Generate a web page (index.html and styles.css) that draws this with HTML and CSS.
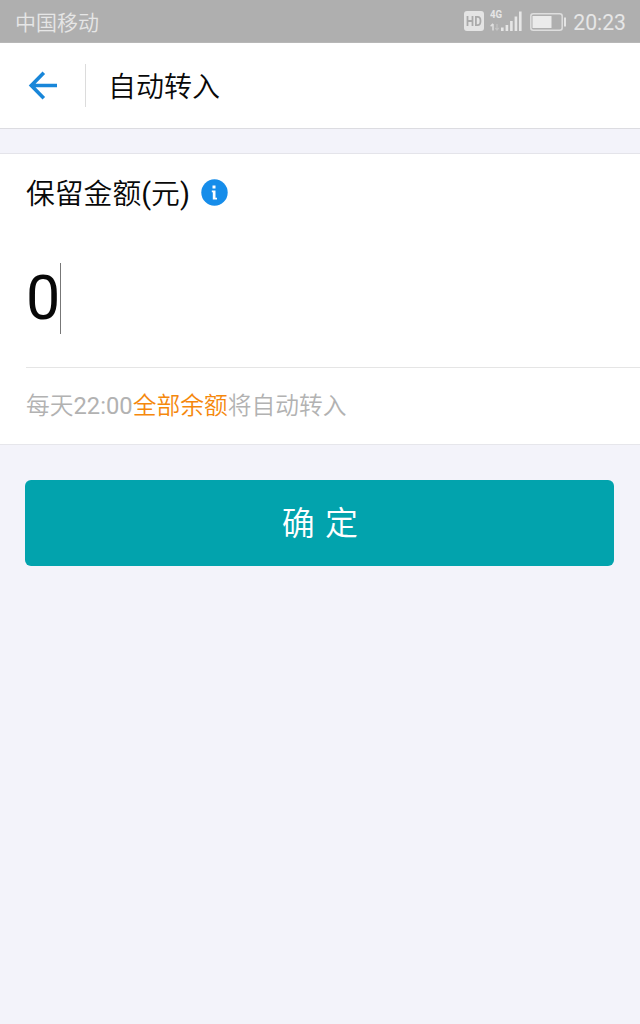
FILE: index.html
```
<!DOCTYPE html>
<html lang="zh-CN">
<head>
<meta charset="utf-8">
<title>自动转入</title>
<link rel="stylesheet" href="styles.css">
</head>
<body>
<div class="status">
  <span class="carrier">中国移动</span>
  <div class="indicators">
    <svg class="hd" width="20" height="20" viewBox="0 0 20 20"><rect width="20" height="20" rx="3" fill="#e4e4e4"/><path d="M3.500 5v10M8.500 5v10M3.500 10h5M11.900 5.900v8.200h1.700c2 0 2.900-1.300 2.900-4.100s-.9-4.100-2.900-4.100z" fill="none" stroke="#aaa" stroke-width="1.800"/></svg>
    <div class="signal">
      <span class="net">4G</span>
      <svg width="32" height="22" viewBox="0 0 32 22"><path d="M12.300 17.500V21M16.900 15v6M21.400 11v10M25.900 6.500v14.500M30.300 1.500V21" stroke="#e6e6e6" stroke-width="2.600"/><path d="M3 20.500V14M.7 16.200L3 13.800" stroke="#e0e0e0" stroke-width="1.500" fill="none"/><path d="M7 14v6M5.300 18L7 20l1.700-2" stroke="#c3c3c3" stroke-width="1.200" fill="none"/></svg>
    </div>
    <svg class="battery" width="37" height="18" viewBox="0 0 37 18"><rect x=".8" y=".8" width="31.400" height="16.400" rx="2.500" fill="none" stroke="#dedede" stroke-width="1.500"/><rect x="2.500" y="3" width="19" height="12" fill="#ebebeb"/><path d="M35 4.500v9" stroke="#e4e4e4" stroke-width="2"/></svg>
    <span class="time">20:23</span>
  </div>
</div>
<header class="header">
  <svg class="back" width="30" height="30" viewBox="0 0 30 30"><path d="M15.800 1.800L3.300 14.500l12.500 12.700M3.500 14.500H29" fill="none" stroke="#1886d9" stroke-width="3.600"/></svg>
  <span class="divider"></span>
  <h1 class="title">自动转入</h1>
</header>
<main>
  <section class="card">
    <div class="label"><span class="label-text">保留金额<span class="paren">(</span>元<span class="paren">)</span></span>
      <svg class="info" width="27" height="27" viewBox="0 0 27 27"><circle cx="13.500" cy="13.500" r="13.200" fill="#168dea"/><path d="M11.500 6.500h3v3h-3zM10.800 11.500h3.700v7.200h1.500v1.800h-4.200v-7.200h-1z" fill="#fff"/></svg>
    </div>
    <div class="amount"><span class="value">0</span><span class="caret"></span></div>
    <p class="hint">每天<span class="clock">22:00</span><span class="accent">全部余额</span>将自动转入</p>
  </section>
  <button class="confirm">确 定</button>
</main>
</body>
</html>
```
FILE: styles.css
```
* { box-sizing: border-box; }
body {
  margin: 0;
  min-height: 1024px;
  background: #f3f3fa;
  font-family: Roboto, "Noto Sans CJK SC DemiLight", "Noto Sans CJK SC", sans-serif;
  color: #080808;
}
.status {
  height: 43px;
  padding: 0 14px 0 15px;
  background: #afafaf;
  border-bottom: 1px solid #b7b7b7;
  display: flex;
  justify-content: space-between;
  align-items: center;
  color: #e6e6e6;
}
.carrier { font-size: 21px; font-weight: 350; line-height: 42px; padding-top: 3px; }
.indicators { display: flex; align-items: center; height: 43px; }
.hd { margin-right: 6px; }
.signal { position: relative; width: 32px; height: 22px; margin-right: 8px; }
.signal svg { display: block; }
.net { position: absolute; left: 0; top: -1px; font-size: 11.5px; line-height: 11px; font-weight: 700; transform: scaleX(.84); transform-origin: left; }
.battery { margin-right: 6px; margin-top: 1px; }
.time { font-size: 21.2px; line-height: 42px; padding-top: 3px; }
.header {
  height: 86px;
  padding-left: 28px;
  background: #fff;
  border-bottom: 1px solid #dcdce1;
  display: flex;
  align-items: center;
}
.divider { width: 1px; height: 43px; background: #dcdcdc; margin: 0 22px 0 27px; }
.title { margin: 0; font-size: 28px; font-weight: 350; line-height: 40px; padding-top: 5px; }
.card {
  margin-top: 24px;
  height: 292px;
  background: #fff;
  border-top: 1px solid #e4e4ea;
  border-bottom: 1px solid #e6e6eb;
  padding-left: 26px;
}
.label { display: flex; align-items: center; height: 77px; font-size: 28.8px; font-weight: 350; gap: 11px; }
.label-text { margin-top: -3px; }
.paren { font-weight: 400; }
.amount { height: 137px; padding-top: 32px; display: flex; border-bottom: 1px solid #e5e5e5; }
.value { font-size: 61px; line-height: 71px; width: 34px; }
.caret { width: 1px; height: 71px; background: #777; }
.hint { margin: 0; font-size: 23.75px; font-weight: 350; line-height: 77px; color: #b2b2b2; }
.clock { font-weight: 400; }
.accent { color: #f5880c; }
.confirm {
  display: block;
  width: 589px;
  height: 86px;
  margin: 35px 0 0 25.4px;
  padding: 1px 0 0;
  border: 0;
  border-radius: 6px;
  background: #02a3ad;
  color: #fff;
  font: 350 33px/84px Roboto, "Noto Sans CJK SC DemiLight", "Noto Sans CJK SC", sans-serif;
  word-spacing: 2px;
}
```
